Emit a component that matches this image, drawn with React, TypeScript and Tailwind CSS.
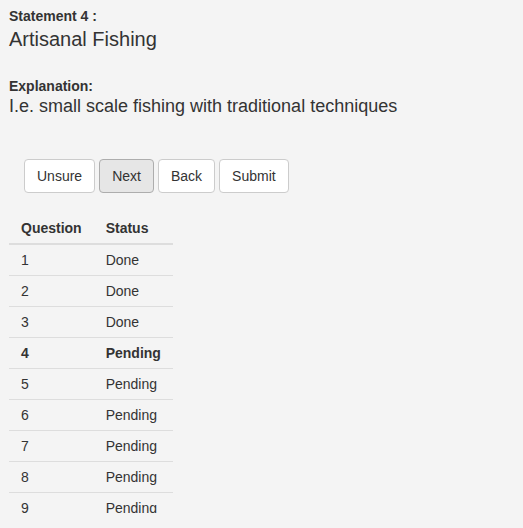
import React from 'react';

const rows = [
  { q: 1, status: 'Done' },
  { q: 2, status: 'Done' },
  { q: 3, status: 'Done' },
  { q: 4, status: 'Pending', current: true },
  { q: 5, status: 'Pending' },
  { q: 6, status: 'Pending' },
  { q: 7, status: 'Pending' },
  { q: 8, status: 'Pending' },
  { q: 9, status: 'Pending' },
];

const buttons = ['Unsure', 'Next', 'Back', 'Submit'];

export default function App() {
  return (
    <div className="h-[528px] bg-[#f4f4f4] text-[#333] font-['Liberation_Sans',Arial,sans-serif]">
      <div className="h-[513px] overflow-hidden px-[9px] pt-[6px]">
        <div className="text-[14px] font-bold leading-[20px]">Statement 4 :</div>
        <div className="mt-[2px] text-[20px] leading-[22px]">Artisanal Fishing</div>

        <div className="mt-[26px] text-[14px] font-bold leading-[20px]">Explanation:</div>
        <div className="text-[18px] leading-[20px]">I.e. small scale fishing with traditional techniques</div>

        <div className="mt-[43px] ml-[15px] flex gap-[4px]">
          {buttons.map((b) => (
            <button
              key={b}
              className={`h-[34px] rounded-[4px] border px-[12px] text-[14px] leading-[20px] text-[#333] ${
                b === 'Next' ? 'border-[#adadad] bg-[#e6e6e6]' : 'border-[#ccc] bg-white'
              }`}
            >
              {b}
            </button>
          ))}
        </div>

        <table className="mt-[20px] border-collapse text-[14px] leading-[20px]">
          <thead>
            <tr className="border-b-2 border-[#ddd]">
              <th className="px-[12px] py-[5px] text-left font-bold">Question</th>
              <th className="px-[12px] py-[5px] text-left font-bold">Status</th>
            </tr>
          </thead>
          <tbody>
            {rows.map((r) => (
              <tr key={r.q} className={`border-t border-[#ddd] first:border-t-0 ${r.current ? 'font-bold' : ''}`}>
                <td className="px-[12px] py-[5px]">{r.q}</td>
                <td className="px-[12px] py-[5px]">{r.status}</td>
              </tr>
            ))}
          </tbody>
        </table>
      </div>
    </div>
  );
}
